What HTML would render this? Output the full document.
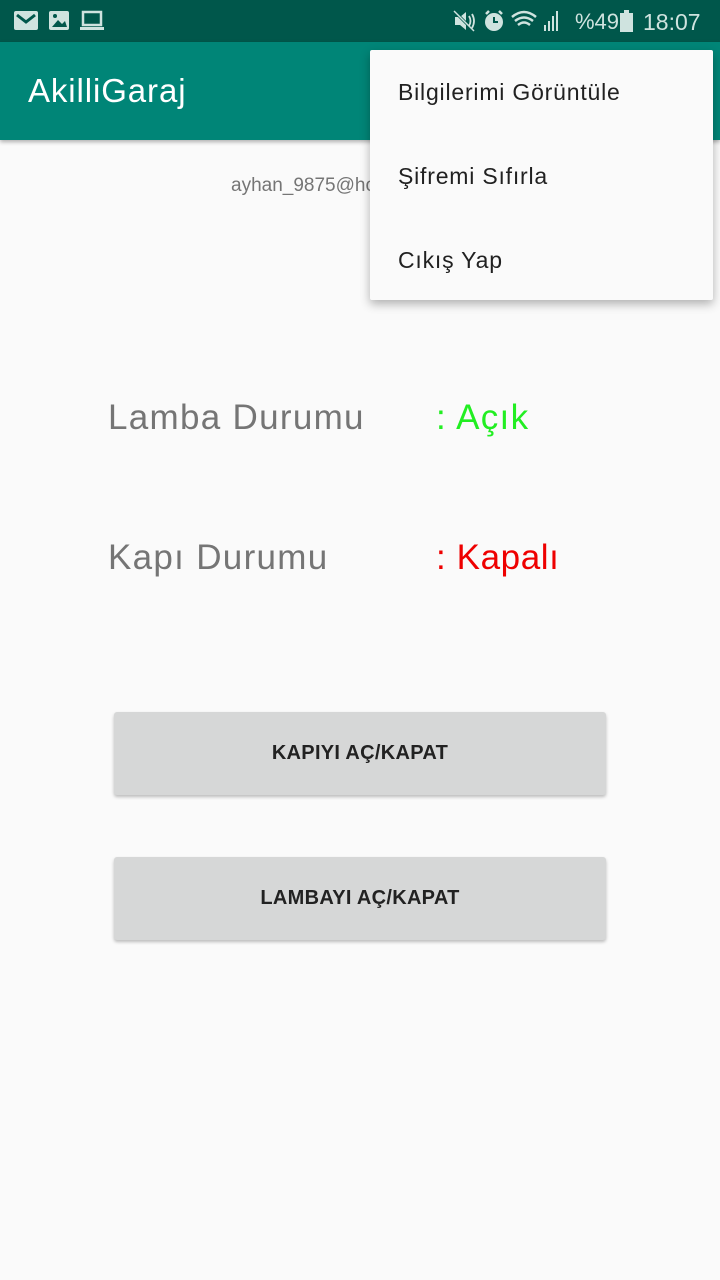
<!DOCTYPE html>
<html><head><meta charset="utf-8"><style>
*{margin:0;padding:0;box-sizing:border-box}
body{width:720px;height:1280px;background:#fafafa;font-family:"Liberation Sans",sans-serif;position:relative;overflow:hidden}
.sb{position:absolute;left:0;top:0;width:720px;height:42px;background:#00574b;color:#cfe3df}
.tb{position:absolute;left:0;top:42px;width:720px;height:98px;background:#008577;box-shadow:0 2px 4px rgba(0,0,0,.3)}
.title{position:absolute;left:28px;top:72px;color:#fff;font-size:33px;letter-spacing:0.9px}
.abs{position:absolute;white-space:nowrap}
.menu{position:absolute;left:370px;top:50px;width:343px;height:250px;background:#fafafa;border-radius:2px;box-shadow:0 4px 10px rgba(0,0,0,.3)}
.menu div{position:absolute;left:28px;font-size:23px;color:#212121;letter-spacing:0.8px}
.lbl{font-size:35px;letter-spacing:1.3px}
.btn{position:absolute;left:114px;width:492px;height:83px;background:#d6d7d7;border-radius:3px;box-shadow:0 2px 3px rgba(0,0,0,.25);text-align:center;line-height:83px;font-weight:bold;font-size:20px;color:#222;letter-spacing:0.3px}
</style></head><body>
<div class="sb">
 <svg class="abs" style="left:14px;top:10px" width="100" height="22">
  <rect x="0" y="1" width="24" height="19" rx="2" fill="#cfe3df"/><path d="M3 5 L12 12 L21 5" stroke="#00574b" stroke-width="3" fill="none"/>
  <rect x="35" y="1" width="20" height="19" rx="2" fill="#cfe3df"/><path d="M38 17 L44 10 L48 14 L51 11 L53 17Z" fill="#00574b"/><circle cx="41" cy="6" r="2" fill="#00574b"/>
  <rect x="69" y="2" width="18" height="13" fill="none" stroke="#cfe3df" stroke-width="2.5"/><rect x="66" y="17" width="24" height="3" fill="#cfe3df"/>
 </svg>
 <svg class="abs" style="left:452px;top:9px" width="120" height="24">
  <path d="M3 8 H8 L14 3 V21 L8 16 H3Z" fill="#cfe3df"/><path d="M2 2 L22 22" stroke="#00574b" stroke-width="3"/><path d="M2 2 L22 22" stroke="#cfe3df" stroke-width="1.5"/>
  <path d="M17 7 Q20 12 17 17 M20 5 Q24 12 20 19" stroke="#cfe3df" stroke-width="1.8" fill="none"/>
  <circle cx="42" cy="13" r="9" fill="#cfe3df"/><path d="M42 8 V13 H46" stroke="#00574b" stroke-width="2" fill="none"/>
  <path d="M34 5 L37 2 M50 5 L47 2" stroke="#cfe3df" stroke-width="2.5"/>
  <path d="M60 8 Q72 -2 84 8 M63 12 Q72 5 81 12 M66 16 Q72 11 78 16" stroke="#cfe3df" stroke-width="2.5" fill="none"/>
  <rect x="92" y="16" width="2" height="6" fill="#cfe3df"/><rect x="96" y="12" width="2" height="10" fill="#cfe3df"/><rect x="100" y="7" width="2" height="15" fill="#cfe3df"/><rect x="104" y="2" width="2" height="20" fill="#cfe3df"/>
 </svg>
 <div class="abs" style="left:575px;top:9px;font-size:22px">%49</div>
 <svg class="abs" style="left:620px;top:10px" width="14" height="22"><rect x="0" y="3" width="13" height="19" fill="#cfe3df"/><rect x="4" y="0" width="5" height="3" fill="#cfe3df"/></svg>
 <div class="abs" style="left:643px;top:9px;font-size:23px">18:07</div>
</div>
<div class="tb"></div>
<div class="abs title">AkilliGaraj</div>
<div class="abs" style="left:231px;top:175px;font-size:19px;color:#757575">ayhan_9875@hotmail.com</div>
<div class="abs lbl" style="left:108px;top:398px;color:#757575">Lamba Durumu</div>
<div class="abs lbl" style="left:436px;top:398px;color:#22ee22">: Açık</div>
<div class="abs lbl" style="left:108px;top:538px;color:#757575">Kapı Durumu</div>
<div class="abs lbl" style="left:436px;top:538px;color:#ee0000;letter-spacing:0.6px">: Kapalı</div>
<div class="btn" style="top:712px">KAPIYI AÇ/KAPAT</div>
<div class="btn" style="top:857px">LAMBAYI AÇ/KAPAT</div>
<div class="menu">
 <div style="top:29px">Bilgilerimi Görüntüle</div>
 <div style="top:113px">Şifremi Sıfırla</div>
 <div style="top:197px">Cıkış Yap</div>
</div>
</body></html>
